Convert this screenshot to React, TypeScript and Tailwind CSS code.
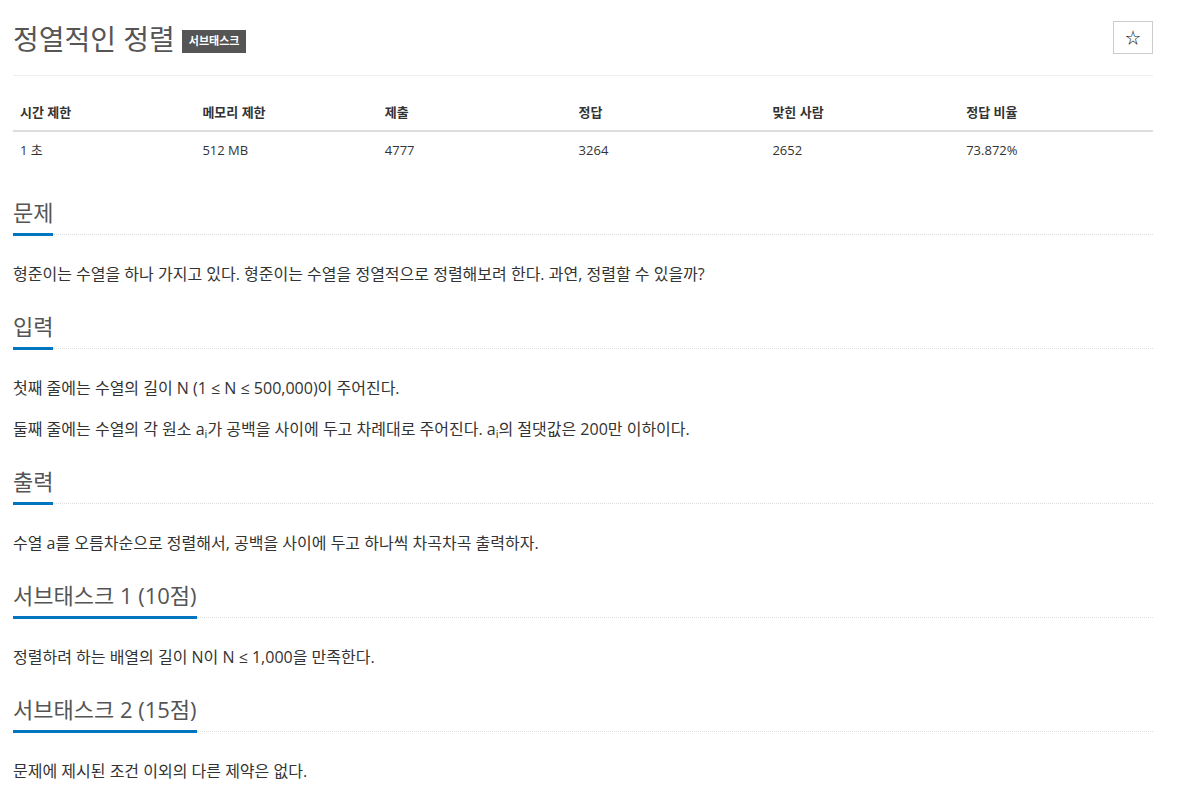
import type { ReactNode } from 'react'

const font = { fontFamily: '"Open Sans", "Noto Sans CJK KR", sans-serif' }

const stats = [
  { label: '시간 제한', value: '1 초', width: 'w-[16%]' },
  { label: '메모리 제한', value: '512 MB', width: 'w-[16%]' },
  { label: '제출', value: '4777', width: 'w-[17%]' },
  { label: '정답', value: '3264', width: 'w-[17%]' },
  { label: '맞힌 사람', value: '2652', width: 'w-[17%]' },
  { label: '정답 비율', value: '73.872%', width: 'w-[17%]' },
]

function Section({ title, first, children }: { title: string; first?: boolean; children: ReactNode }) {
  return (
    <section className={first ? 'mt-[29px]' : 'mt-[25px]'}>
      <div className="flex items-end">
        <h2 className="text-[22px] leading-[30px] font-normal text-[#555] pb-[6px] border-b-[3px] border-[#0076c0]">
          {title}
        </h2>
        <div className="flex-1 border-b border-dotted border-[#ddd] mb-[1px]" />
      </div>
      <div className="mt-[26px] flex flex-col gap-[17px] text-[16px] leading-[24px] text-[#333]">
        {children}
      </div>
    </section>
  )
}

function Sub({ children }: { children: ReactNode }) {
  return <sub className="text-[11px]">{children}</sub>
}

export default function App() {
  return (
    <div className="bg-white min-h-[797px] pl-[13px]" style={font}>
      <div className="w-[1140px] pb-10">
        <div className="flex items-start justify-between pt-[20px]">
          <div className="flex items-center">
            <h1 className="text-[28px] leading-[38px] font-normal text-[#555]">정열적인 정렬</h1>
            <span className="ml-[7px] mt-[4px] h-[23px] px-[7px] flex items-center bg-[#555] text-white text-[11px] font-bold">
              서브태스크
            </span>
          </div>
          <button
            className="mt-[1px] w-[40px] h-[33px] border border-[#ccc] bg-white flex items-center justify-center text-[15px] text-[#111]"
            style={{ fontFamily: '"Noto Sans CJK KR", sans-serif' }}
          >
            ☆
          </button>
        </div>
        <div className="mt-[17px] border-t border-[#eee]" />

        <table className="mt-[18px] w-full text-[13px] text-[#333] table-fixed">
          <thead>
            <tr className="border-b-2 border-[#ddd]">
              {stats.map(s => (
                <th key={s.label} className={`${s.width} text-left font-bold px-[7px] py-2 leading-5`}>
                  {s.label}
                </th>
              ))}
            </tr>
          </thead>
          <tbody>
            <tr>
              {stats.map(s => (
                <td key={s.label} className="px-[7px] py-2 leading-5">
                  {s.value}
                </td>
              ))}
            </tr>
          </tbody>
        </table>

        <Section title="문제" first>
          <p>형준이는 수열을 하나 가지고 있다. 형준이는 수열을 정열적으로 정렬해보려 한다. 과연, 정렬할 수 있을까?</p>
        </Section>

        <Section title="입력">
          <p>첫째 줄에는 수열의 길이 N (1 ≤ N ≤ 500,000)이 주어진다.</p>
          <p>
            둘째 줄에는 수열의 각 원소 a<Sub>i</Sub>가 공백을 사이에 두고 차례대로 주어진다. a<Sub>i</Sub>의 절댓값은 200만 이하이다.
          </p>
        </Section>

        <Section title="출력">
          <p>수열 a를 오름차순으로 정렬해서, 공백을 사이에 두고 하나씩 차곡차곡 출력하자.</p>
        </Section>

        <Section title="서브태스크 1 (10점)">
          <p>정렬하려 하는 배열의 길이 N이 N ≤ 1,000을 만족한다.</p>
        </Section>

        <Section title="서브태스크 2 (15점)">
          <p>문제에 제시된 조건 이외의 다른 제약은 없다.</p>
        </Section>
      </div>
    </div>
  )
}
